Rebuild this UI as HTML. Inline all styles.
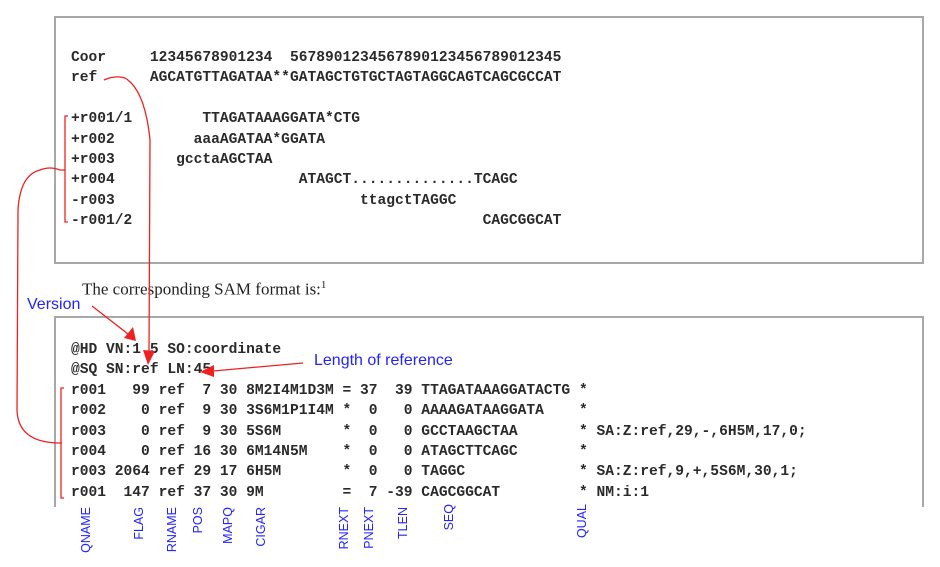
<!DOCTYPE html>
<html><head><meta charset="utf-8"><style>
html,body{margin:0;padding:0;background:#fff;}
body{width:940px;height:565px;position:relative;overflow:hidden;}
.box{position:absolute;border:2px solid #a8a8a8;box-sizing:border-box;}
pre{position:absolute;margin:0;font-family:"Liberation Mono",monospace;font-size:14.6px;line-height:20.4px;color:#2a2a2a;font-weight:bold;letter-spacing:0;}
.lbl{position:absolute;color:#2323ff;font-family:"Liberation Sans",sans-serif;}
.v{position:absolute;top:507px;color:#2323ff;font-family:"Liberation Sans",sans-serif;font-size:12.5px;writing-mode:vertical-rl;transform:rotate(180deg);line-height:13px;}
</style></head><body>
<div class="box" style="left:54px;top:16px;width:870px;height:248px;"></div>
<div class="box" style="left:54px;top:316px;width:870px;height:200px;border-bottom:none;"></div>
<div style="position:absolute;left:0;top:507px;width:940px;height:60px;background:#fff;"></div>
<pre style="left:71px;top:48px;">Coor     12345678901234  5678901234567890123456789012345
ref      AGCATGTTAGATAA**GATAGCTGTGCTAGTAGGCAGTCAGCGCCAT

+r001/1        TTAGATAAAGGATA*CTG
+r002         aaaAGATAA*GGATA
+r003       gcctaAGCTAA
+r004                     ATAGCT..............TCAGC
-r003                            ttagctTAGGC
-r001/2                                        CAGCGGCAT</pre>
<div style="position:absolute;left:82px;top:279px;font-family:'Liberation Serif',serif;font-size:17px;color:#222;">The corresponding SAM format is:<sup style="font-size:11px">1</sup></div>
<pre style="left:71px;top:340px;">@HD VN:1.5 SO:coordinate
@SQ SN:ref LN:45
r001   99 ref  7 30 8M2I4M1D3M = 37  39 TTAGATAAAGGATACTG *
r002    0 ref  9 30 3S6M1P1I4M *  0   0 AAAAGATAAGGATA    *
r003    0 ref  9 30 5S6M       *  0   0 GCCTAAGCTAA       * SA:Z:ref,29,-,6H5M,17,0;
r004    0 ref 16 30 6M14N5M    *  0   0 ATAGCTTCAGC       *
r003 2064 ref 29 17 6H5M       *  0   0 TAGGC             * SA:Z:ref,9,+,5S6M,30,1;
r001  147 ref 37 30 9M         =  7 -39 CAGCGGCAT         * NM:i:1</pre>
<div class="lbl" style="left:27px;top:296px;font-size:16px;">Version</div>
<div class="lbl" style="left:314px;top:352px;font-size:16px;">Length of reference</div>
<svg width="940" height="565" style="position:absolute;left:0;top:0" fill="none" stroke="#f02020" stroke-width="1.3">
<path d="M104 80 Q115 75 125 78 Q145 90 150 140 L149 352"/>
<polygon points="143,350 155,351 148,365" fill="#f02020" stroke="none"/>
<path d="M92 306 L128 334"/>
<polygon points="124,338 133,327 136,341" fill="#f02020" stroke="none"/>
<path d="M303 363 L213 371"/>
<polygon points="214,365 214,377 200,372" fill="#f02020" stroke="none"/>
<path d="M68 116 L65 116 L65 222 L68 222 M65 170 L60 170"/>
<path d="M60 170 Q50 166 40 170 Q20 175 18 210 L17 410 Q18 442 58 443 L62 443"/>
<path d="M64 388 L61 388 L61 498 L64 498"/>
</svg>
<div class="v" style="left:80px;">QNAME</div>
<div class="v" style="left:133px;">FLAG</div>
<div class="v" style="left:166px;">RNAME</div>
<div class="v" style="left:192px;">POS</div>
<div class="v" style="left:222px;">MAPQ</div>
<div class="v" style="left:255px;">CIGAR</div>
<div class="v" style="left:338px;">RNEXT</div>
<div class="v" style="left:363px;">PNEXT</div>
<div class="v" style="left:397px;">TLEN</div>
<div class="v" style="left:443px;top:504px;">SEQ</div>
<div class="v" style="left:576px;top:504px;">QUAL</div>
</body></html>
